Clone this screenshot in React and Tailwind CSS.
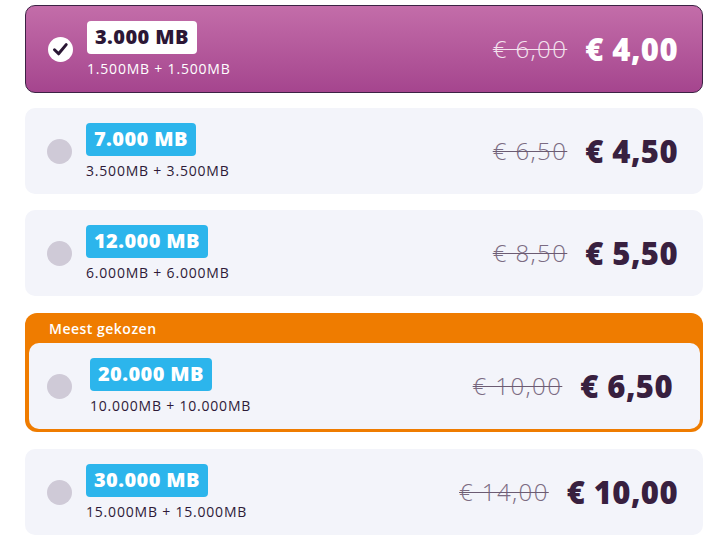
import React from "react";

const plans = [
  { mb: "7.000 MB", sub: "3.500MB + 3.500MB", old: "€ 6,50", price: "€ 4,50" },
  { mb: "12.000 MB", sub: "6.000MB + 6.000MB", old: "€ 8,50", price: "€ 5,50" },
];

const font = { fontFamily: '"Open Sans", "Liberation Sans", sans-serif' };

function Radio() {
  return <div className="w-[25px] h-[25px] rounded-full bg-[#cfcad7] shrink-0" />;
}

function Check() {
  return (
    <div className="w-[25px] h-[25px] rounded-full bg-white shrink-0 flex items-center justify-center">
      <svg width="19" height="19" viewBox="0 0 19 19">
        <path d="M3.5 9.8 L7.6 13.8 L15.2 4.6" fill="none" stroke="#2a1634" strokeWidth="3" strokeLinecap="round" strokeLinejoin="round" />
      </svg>
    </div>
  );
}

function Prices({ old, price, light }) {
  return (
    <div className="flex items-center gap-[18px]">
      <span
        className={`text-[24px] leading-none font-light line-through decoration-1 tracking-[1.4px] ${light ? "text-[#f3e3ee] decoration-[#f3e3ee]" : "text-[#7b6b82] decoration-[#6b5b72]"}`}
      >
        {old}
      </span>
      <span className={`text-[31px] leading-none font-extrabold tracking-[0.4px] ${light ? "text-white" : "text-[#38203f]"}`}>{price}</span>
    </div>
  );
}

function Badge({ children, white }) {
  return (
    <div
      className={`h-[33px] px-[8px] rounded-[4px] flex items-center text-[20px] font-extrabold tracking-[0.4px] ${white ? "bg-white text-[#2c1736]" : "bg-[#2cb5ec] text-white"}`}
    >
      {children}
    </div>
  );
}

function Card({ mb, sub, old, price, pl = "pl-[22px]", gap = "gap-[14px]", pr = "pr-[25px]" }) {
  return (
    <div className={`h-[86px] rounded-[10px] bg-[#f3f4fa] flex items-center justify-between ${pl} ${pr}`}>
      <div className={`flex items-center ${gap}`}>
        <Radio />
        <div className="flex flex-col items-start">
          <Badge>{mb}</Badge>
          <div className="mt-[6px] text-[14px] leading-[18px] text-[#2e1a38] tracking-[0.8px]">{sub}</div>
        </div>
      </div>
      <Prices old={old} price={price} />
    </div>
  );
}

export default function App() {
  return (
    <div className="w-[728px] h-[549px] bg-white pt-[5px] px-[25px] flex flex-col" style={font}>
      <div className="h-[88px] rounded-[10px] border border-[#3c2244] bg-gradient-to-b from-[#c36da9] to-[#a5458e] flex items-center justify-between pl-[22px] pr-[24px]">
        <div className="flex items-center gap-[14px]">
          <Check />
          <div className="flex flex-col items-start">
            <Badge white>3.000 MB</Badge>
            <div className="mt-[6px] text-[14px] leading-[18px] text-white tracking-[0.8px]">1.500MB + 1.500MB</div>
          </div>
        </div>
        <Prices old="€ 6,00" price="€ 4,00" light />
      </div>

      <div className="mt-[15px] flex flex-col gap-[16px]">
        {plans.map((p) => (
          <Card key={p.mb} {...p} />
        ))}
      </div>

      <div className="mt-[17px] rounded-[12px] bg-[#ef7c00] pl-[4px] pr-[3px] pb-[3px]">
        <div className="h-[30px] flex items-center pl-[20px] text-[14px] font-semibold tracking-[0.5px] text-white">Meest gekozen</div>
        <Card mb="20.000 MB" sub="10.000MB + 10.000MB" old="€ 10,00" price="€ 6,50" pl="pl-[18px]" gap="gap-[18px]" pr="pr-[27px]" />
      </div>

      <div className="mt-[17px]">
        <Card mb="30.000 MB" sub="15.000MB + 15.000MB" old="€ 14,00" price="€ 10,00" />
      </div>
    </div>
  );
}
